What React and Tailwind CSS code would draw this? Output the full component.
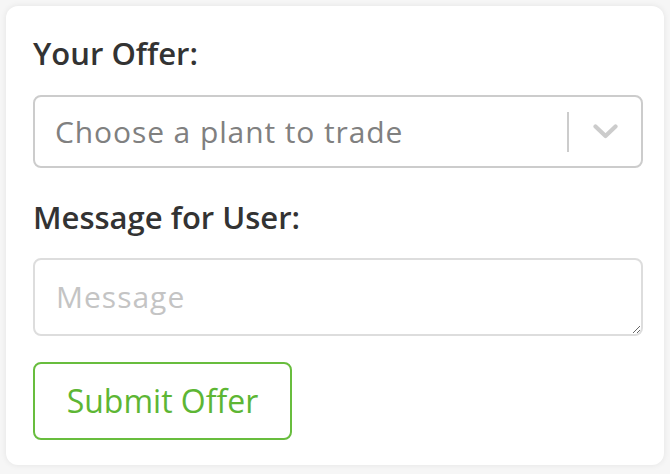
import React from "react";

export default function App() {
  return (
    <div className="w-[670px] h-[474px] bg-[#f6f6f6] pt-[6px] pl-[6px]" style={{ fontFamily: '"Open Sans", sans-serif' }}>
      <div className="w-[658px] h-[459px] bg-white rounded-[12px] shadow-[0_0_6px_rgba(0,0,0,0.08)] pl-[27px] pr-[21px] pt-[27px]">
        <div className="text-[31px] leading-[40px] font-semibold text-[#333]">Your Offer:</div>
        <div className="mt-[22px] h-[73px] border-2 border-[#cccccc] rounded-[8px] flex items-center">
          <div className="flex-1 pl-[20px] text-[30px] tracking-[0.9px] text-[#808080]">Choose a plant to trade</div>
          <div className="w-[2px] h-[40px] bg-[#cccccc]"></div>
          <div className="w-[72px] flex items-center justify-center">
            <svg width="25" height="15" viewBox="0 0 25 15">
              <path d="M2.5 2.5 L12.5 12 L22.5 2.5" fill="none" stroke="#cccccc" strokeWidth="4.2" strokeLinecap="round" strokeLinejoin="round" />
            </svg>
          </div>
        </div>
        <div className="mt-[29px] text-[31px] leading-[40px] font-semibold text-[#333]">Message for User:</div>
        <textarea
          placeholder="Message"
          className="mt-[21px] block w-full h-[78px] border-2 border-[#dddddd] rounded-[8px] pl-[21px] pr-[10px] py-[14px] text-[30px] leading-[45px] tracking-[1px] text-[#333] placeholder:text-[#c4c4c4] outline-none resize-y"
        ></textarea>
        <button className="mt-[26px] h-[78px] w-[259px] flex items-center justify-center border-2 border-[#68bd3e] rounded-[8px] text-[32px] text-[#5db634] bg-white">
          Submit Offer
        </button>
      </div>
    </div>
  );
}
